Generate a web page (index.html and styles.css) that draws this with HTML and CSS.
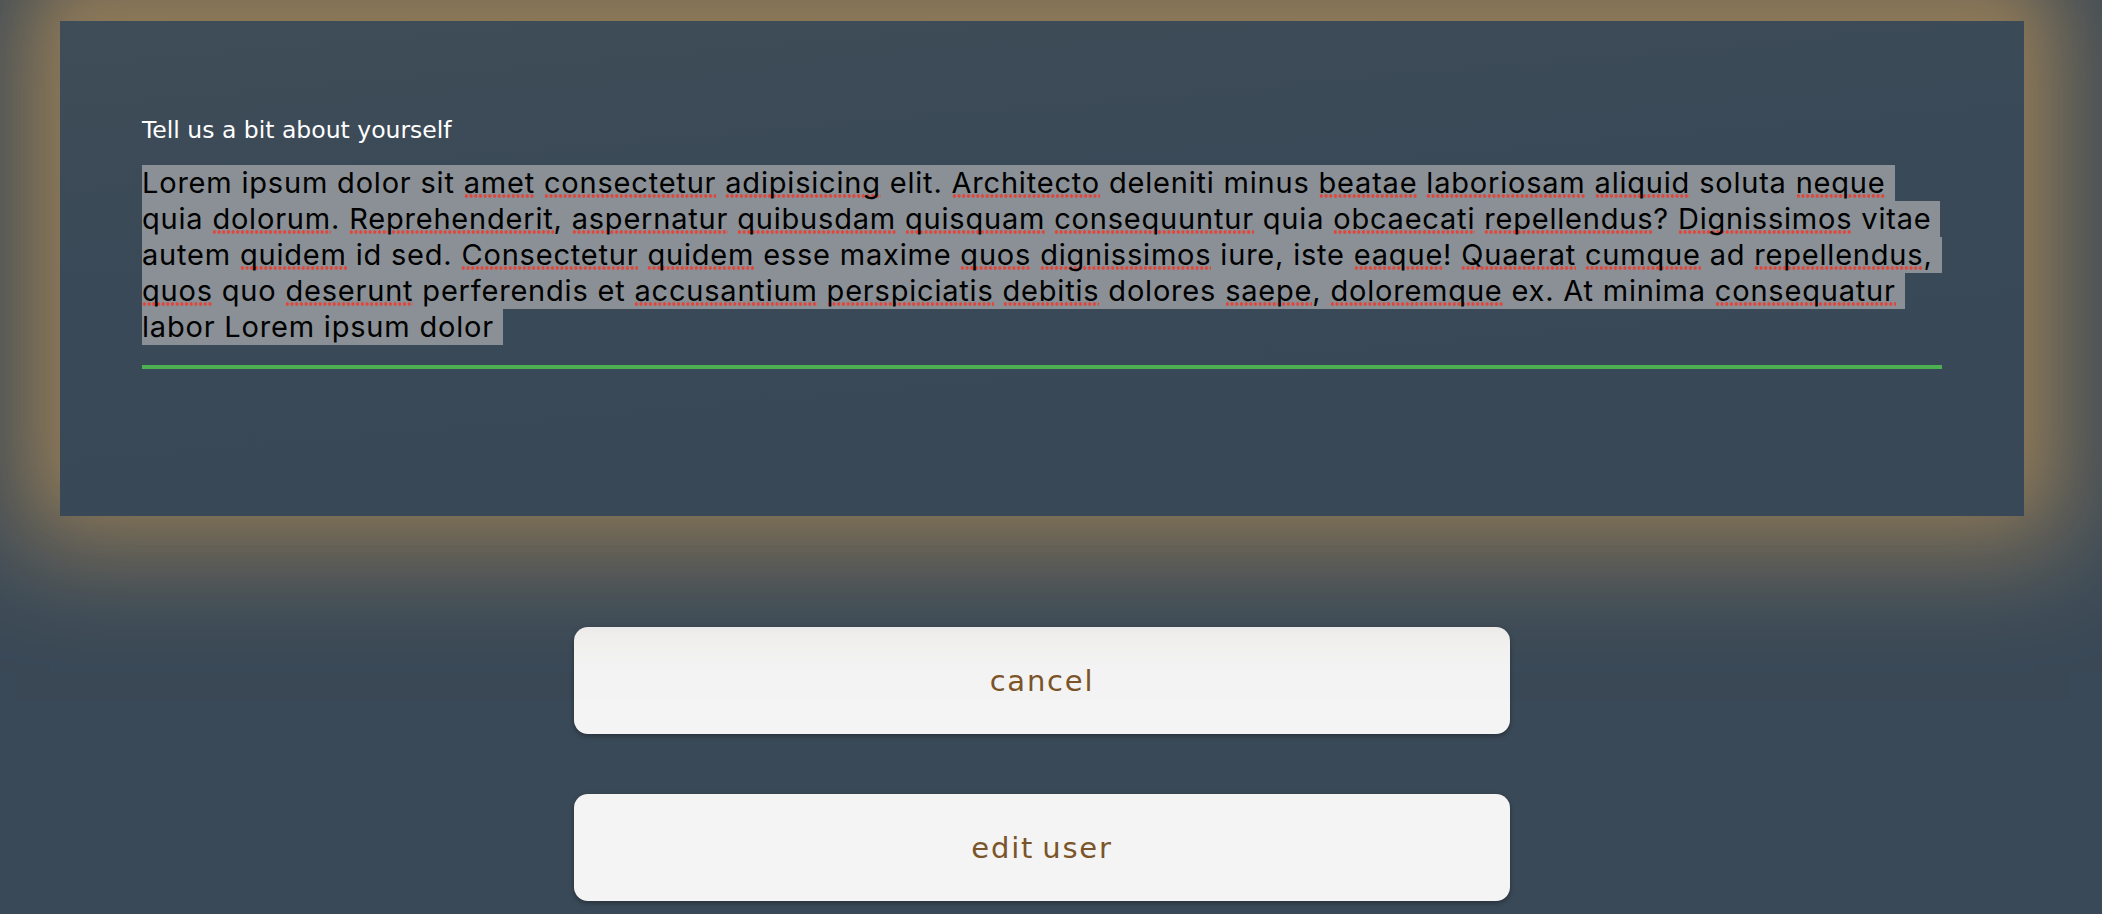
FILE: index.html
```html
<!DOCTYPE html>
<html lang="en">
<head>
<meta charset="utf-8">
<title>Edit user</title>
<link rel="stylesheet" href="styles.css">
</head>
<body>
<div class="page">
  <section class="card">
    <label class="label">Tell us a bit about yourself</label>
    <div class="field">
      <div class="ln">Lorem ipsum dolor sit <u>amet</u> <u>consectetur</u> <u>adipisicing</u> elit. <u>Architecto</u> deleniti minus <u>beatae</u> <u>laboriosam</u> <u>aliquid</u> soluta <u>neque</u> </div>
      <div class="ln">quia <u>dolorum</u>. <u>Reprehenderit</u>, <u>aspernatur</u> <u>quibusdam</u> <u>quisquam</u> <u>consequuntur</u> quia <u>obcaecati</u> <u>repellendus</u>? <u>Dignissimos</u> vitae </div>
      <div class="ln">autem <u>quidem</u> id sed. <u>Consectetur</u> <u>quidem</u> esse maxime <u>quos</u> <u>dignissimos</u> iure, iste <u>eaque</u>! <u>Quaerat</u> <u>cumque</u> ad <u>repellendus</u>, </div>
      <div class="ln"><u>quos</u> quo <u>deserunt</u> perferendis et <u>accusantium</u> <u>perspiciatis</u> <u>debitis</u> dolores <u>saepe</u>, <u>doloremque</u> ex. At minima <u>consequatur</u> </div>
      <div class="ln">labor Lorem ipsum dolor </div>
    </div>
  </section>
  <div class="actions">
    <button class="btn" type="button">cancel</button>
    <button class="btn" type="button">edit user</button>
  </div>
</div>
</body>
</html>
```

FILE: styles.css
```css
html, body {
  margin: 0;
  padding: 0;
}
body {
  background: #3a4957;
  height: 914px;
  overflow: hidden;
}
.page {
  width: 2084px;
  padding-top: 21px;
}
.card {
  margin: 0 60px;
  height: 495px;
  box-sizing: border-box;
  padding: 96px 82px 0;
  background: linear-gradient(175deg, #3f4d58 0%, #3a4957 40%, #394856 100%);
  box-shadow: 0 -25px 50px 0 #8c7858, 0 -10px 100px 45px #8c7858;
  position: relative;
}
.label {
  display: block;
  font-family: "DejaVu Sans", sans-serif;
  font-size: 23.5px;
  line-height: 26px;
  color: #ffffff;
  margin-bottom: 22px;
}
.field {
  font-family: Inter, "Liberation Sans", sans-serif;
  font-size: 29px;
  letter-spacing: 0.8px;
  line-height: 36px;
  color: #000;
  padding-bottom: 20px;
  border-bottom: 4px solid #4caf50;
}
.ln {
  width: fit-content;
  max-width: 100%;
  white-space: pre;
  overflow: hidden;
  background: #8a9095;
}
.ln u {
  text-decoration: none;
  background-image: radial-gradient(circle, #e2463b 1.5px, transparent 2px);
  background-size: 4.7px 4px;
  background-repeat: repeat-x;
  background-position: 0 calc(100% - 2px);
}
.actions {
  margin-top: 111px;
  display: flex;
  flex-direction: column;
  align-items: center;
  gap: 60px;
}
.btn {
  width: 936px;
  height: 107px;
  border: none;
  border-radius: 14px;
  background: #f4f4f4;
  color: #7b5429;
  font-family: "DejaVu Sans", sans-serif;
  font-size: 29px;
  letter-spacing: 1.8px;
  word-spacing: -3px;
  box-shadow: 0 2px 5px rgba(0, 0, 0, 0.35);
  cursor: pointer;
}
```
